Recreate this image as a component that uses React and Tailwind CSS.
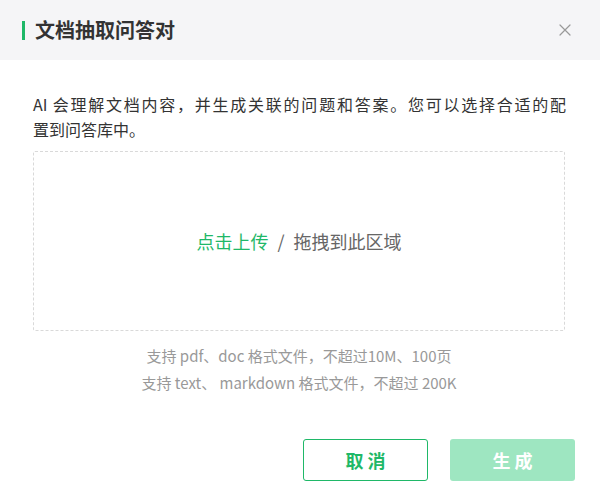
import React from "react";

const font = { fontFamily: '"Noto Sans CJK SC", "Noto Sans", sans-serif' };

export default function App() {
  return (
    <div
      className="w-[600px] h-[504px] bg-white flex flex-col text-[#333]"
      style={font}
    >
      {/* Header */}
      <div className="h-[60px] bg-[#f5f5f7] flex items-center justify-between pl-[22px] pr-[28px] shrink-0">
        <div className="flex items-center gap-[10px]">
          <span className="w-[3px] h-[19px] bg-[#1fb868]" />
          <h1 className="text-[20px] font-bold leading-none text-[#333]">
            文档抽取问答对
          </h1>
        </div>
        <button className="w-[14px] h-[14px] flex items-center justify-center text-[#999]">
          <svg width="12" height="12" viewBox="0 0 12 12" fill="none">
            <path
              d="M1 1L11 11M11 1L1 11"
              stroke="currentColor"
              strokeWidth="1.2"
              strokeLinecap="round"
            />
          </svg>
        </button>
      </div>

      {/* Body */}
      <div className="px-[33px] pt-[32px]">
        <div className="text-[16px] leading-[25px] text-[#333] w-[533px]">
          <p className="text-justify [text-align-last:justify]">
            AI 会理解文档内容，并生成关联的问题和答案。您可以选择合适的配
          </p>
          <p>置到问答库中。</p>
        </div>
        <div className="mt-[9px] h-[180px] w-[532px] border border-dashed border-[#d9d9d9] rounded-[2px] flex items-center justify-center text-[18px]">
          <span className="text-[#1fb868]">点击上传</span>
          <span className="text-[#666] mx-[9px]">/</span>
          <span className="text-[#666]">拖拽到此区域</span>
        </div>
        <div className="mt-[11px] w-[532px] text-center text-[15px] leading-[27px] text-[#999]">
          <p>支持 pdf、doc 格式文件，不超过10M、100页</p>
          <p>支持 text、 markdown 格式文件，不超过 200K</p>
        </div>
      </div>

      {/* Footer */}
      <div className="mt-auto mb-[23px] pr-[25px] flex justify-end gap-[22px]">
        <button className="w-[125px] h-[42px] rounded-[3px] border border-[#1fb868] bg-white text-[#1fb868] text-[18px] font-bold tracking-[4px] pl-[4px]">
          取消
        </button>
        <button className="w-[125px] h-[42px] rounded-[3px] bg-[#9ee6c1] text-white text-[18px] font-bold tracking-[4px] pl-[4px]">
          生成
        </button>
      </div>
    </div>
  );
}
